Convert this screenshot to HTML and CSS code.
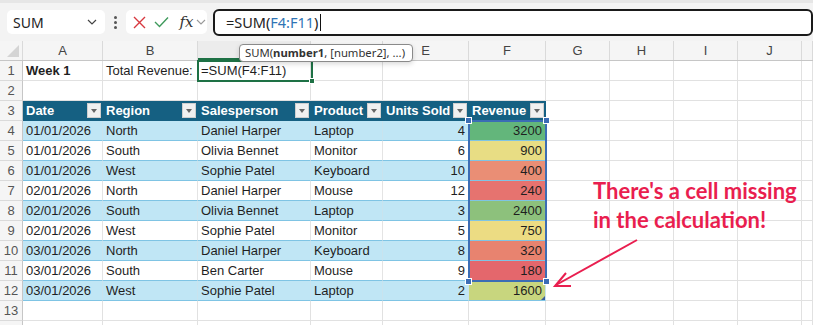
FILE: index.html
```html
<!DOCTYPE html>
<html lang="en">
<head>
  <meta charset="UTF-8">
  <title>Revenue sheet</title>
  <link rel="stylesheet" href="styles.css">
</head>
<body>

<div class="toolbar">
  <div class="name-box">
    <span>SUM</span>
    <svg width="10" height="6" viewBox="0 0 10 6"><path d="M1 1 L5 5 L9 1" fill="none" stroke="#444" stroke-width="1.2"/></svg>
  </div>
  <div class="dots"><i></i><i></i><i></i></div>
  <div class="fx-box">
    <svg width="13" height="13" viewBox="0 0 13 13"><path d="M1 1 L12 12 M12 1 L1 12" stroke="#d7383f" stroke-width="1.4"/></svg>
    <svg width="15" height="12" viewBox="0 0 15 12"><path d="M1 6 L5.5 10.5 L14 1.5" fill="none" stroke="#3f9a5c" stroke-width="1.4"/></svg>
    <span class="fx">fx</span>
    <svg width="10" height="6" viewBox="0 0 10 6"><path d="M1 1 L5 5 L9 1" fill="none" stroke="#999" stroke-width="1.1"/></svg>
  </div>
  <div class="formula-box">
    <span>=SUM(</span><span class="ref">F4:F11</span><span>)</span><span class="caret"></span>
  </div>
</div>

<div class="sheet">
  <div class="colhead">
    <div class="corner"><svg width="12" height="12" viewBox="0 0 12 12"><path d="M12 0 L12 12 L0 12 Z" fill="#d4d4d4"/></svg></div>
    <!-- C and D labels sit under the tooltip -->
    <div>A</div><div>B</div><div class="active"></div><div></div><div>E</div>
    <div>F</div><div>G</div><div>H</div><div>I</div><div>J</div><div></div>
  </div>

  <div class="row">
    <div class="rn">1</div>
    <div class="c bold">Week 1</div><div class="c">Total Revenue:</div><div class="c">=SUM(F4:F11)</div>
    <div class="c"></div><div class="c"></div><div class="c"></div><div class="c"></div><div class="c"></div><div class="c"></div><div class="c"></div><div class="c"></div>
  </div>
  <div class="row">
    <div class="rn">2</div>
    <div class="c"></div><div class="c"></div><div class="c"></div><div class="c"></div><div class="c"></div><div class="c"></div><div class="c"></div><div class="c"></div><div class="c"></div><div class="c"></div><div class="c"></div>
  </div>
  <div class="row">
    <div class="rn">3</div>
    <div class="th">Date<b class="dd"></b></div>
    <div class="th">Region<b class="dd"></b></div>
    <div class="th">Salesperson<b class="dd"></b></div>
    <div class="th">Product<b class="dd"></b></div>
    <div class="th">Units Sold<b class="dd"></b></div>
    <div class="th">Revenue<b class="dd"></b></div>
    <div class="c"></div><div class="c"></div><div class="c"></div><div class="c"></div><div class="c"></div>
  </div>
  <div id="rows"></div>
  <div class="row">
    <div class="rn">13</div>
    <div class="c"></div><div class="c"></div><div class="c"></div><div class="c"></div><div class="c"></div><div class="c"></div><div class="c"></div><div class="c"></div><div class="c"></div><div class="c"></div><div class="c"></div>
  </div>
  <div class="row">
    <div class="rn"></div>
    <div class="c"></div><div class="c"></div><div class="c"></div><div class="c"></div><div class="c"></div><div class="c"></div><div class="c"></div><div class="c"></div><div class="c"></div><div class="c"></div><div class="c"></div>
  </div>

  <div class="active-cell"><i class="handle"></i></div>
  <div class="selection">
    <i class="knob tl"></i><i class="knob tr"></i><i class="knob bl"></i><i class="knob br"></i>
  </div>
  <i class="corner-mark"></i>

  <div class="tooltip">SUM(<b>number1</b>, [number2], ...)</div>

  <div class="note">There's a cell missing<br>in the calculation!</div>
  <svg class="arrow" width="100" height="60" viewBox="0 0 100 60">
    <path d="M90 5 L9 50" stroke="#e91e4f" stroke-width="2" fill="none"/>
    <path d="M19 38 L8 51 L24 51" stroke="#e91e4f" stroke-width="2" fill="none"/>
  </svg>
</div>

<script>
  const data = [
    ["01/01/2026", "North", "Daniel Harper", "Laptop", 4, 3200, "#63b67b"],
    ["01/01/2026", "South", "Olivia Bennet", "Monitor", 6, 900, "#e8dd84"],
    ["01/01/2026", "West", "Sophie Patel", "Keyboard", 10, 400, "#ea8e75"],
    ["02/01/2026", "North", "Daniel Harper", "Mouse", 12, 240, "#e6736f"],
    ["02/01/2026", "South", "Olivia Bennet", "Laptop", 3, 2400, "#8dc17c"],
    ["02/01/2026", "West", "Sophie Patel", "Monitor", 5, 750, "#ecdc83"],
    ["03/01/2026", "North", "Daniel Harper", "Keyboard", 8, 320, "#e8836f"],
    ["03/01/2026", "South", "Ben Carter", "Mouse", 9, 180, "#e4676c"],
    ["03/01/2026", "West", "Sophie Patel", "Laptop", 2, 1600, "#c8d67e"]
  ];

  const rows = document.getElementById("rows");

  data.forEach((r, i) => {
    const row = document.createElement("div");
    row.className = "row " + (i % 2 === 0 ? "band" : "plain");
    let html = '<div class="rn">' + (i + 4) + '</div>';
    html += '<div class="c t">' + r[0] + '</div>';
    html += '<div class="c t">' + r[1] + '</div>';
    html += '<div class="c t">' + r[2] + '</div>';
    html += '<div class="c t">' + r[3] + '</div>';
    html += '<div class="c t num">' + r[4] + '</div>';
    html += '<div class="c t num rev" style="background:' + r[6] + '">' + r[5] + '</div>';
    for (let k = 0; k < 5; k++) html += '<div class="c"></div>';
    row.innerHTML = html;
    rows.appendChild(row);
  });
</script>

</body>
</html>
```

FILE: styles.css
```css
* { box-sizing: border-box; }
body {
  margin: 0;
  width: 813px;
  height: 325px;
  overflow: hidden;
  background: #fff;
  font-family: "Liberation Sans", Arial, sans-serif;
  color: #1f1f1f;
}

/* formula bar */
.toolbar {
  height: 41px;
  display: flex;
  align-items: center;
  padding-left: 7px;
  background: #f3f3f3;
  border-top: 3px solid #e6e6e6;
}
.name-box {
  width: 101px;
  height: 24px;
  background: #fff;
  border-radius: 5px;
  display: flex;
  align-items: center;
  justify-content: space-between;
  padding: 0 8px 0 6px;
  font-family: "Noto Sans", sans-serif;
  font-size: 14px;
  color: #222;
}
.dots {
  width: 22px;
  display: flex;
  flex-direction: column;
  align-items: center;
  gap: 2px;
}
.dots i {
  width: 3px;
  height: 3px;
  border-radius: 50%;
  background: #555;
}
.fx-box {
  width: 83px;
  height: 24px;
  background: #fff;
  border-radius: 5px;
  display: flex;
  align-items: center;
  gap: 8px;
  padding-left: 7px;
}
.fx {
  font-family: "DejaVu Serif", serif;
  font-style: italic;
  font-size: 15px;
  color: #333;
  margin-left: 2px;
  margin-right: -5px;
}
.formula-box {
  margin-left: 6px;
  width: 620px;
  height: 27px;
  background: #fff;
  border: 2px solid #1a1a1a;
  border-radius: 6px;
  display: flex;
  align-items: center;
  padding-left: 11px;
  font-family: "Noto Sans", sans-serif;
  font-size: 14.5px;
  color: #222;
}
.formula-box .ref { color: #2f74b5; }
.caret {
  width: 1px;
  height: 17px;
  background: #111;
  margin-left: 2px;
}

/* grid */
.sheet { position: relative; }
.colhead, .row {
  display: grid;
  grid-template-columns: 23px 80px 95px 113px 72px 86px 77px 64px 64px 64px 64px 1fr;
  height: 20px;
}
.colhead {
  background: #f5f5f5;
  border-bottom: 1px solid #c6c6c6;
  font-size: 13px;
  color: #444;
}
.colhead div {
  display: flex;
  align-items: center;
  justify-content: center;
  border-right: 1px solid #dadada;
}
.colhead .corner {
  justify-content: flex-end;
  align-items: flex-end;
  padding: 0 3px 3px 0;
}
.colhead .active {
  border-bottom: 2px solid #1e7145;
  background: #ececec;
}
.rn {
  background: #f5f5f5;
  border-right: 1px solid #c6c6c6;
  border-bottom: 1px solid #dadada;
  font-size: 13px;
  color: #555;
  display: flex;
  align-items: center;
  justify-content: center;
}
.c {
  border-right: 1px solid #e1e1e1;
  border-bottom: 1px solid #e1e1e1;
  font-size: 13px;
  line-height: 19px;
  padding: 0 3px;
  white-space: nowrap;
  overflow: visible;
}
.bold { font-weight: bold; }
.th {
  background: #156082;
  color: #fff;
  font-weight: bold;
  font-size: 13px;
  line-height: 20px;
  padding: 0 3px;
  position: relative;
  white-space: nowrap;
}
.dd {
  position: absolute;
  right: 2px;
  top: 2px;
  width: 14px;
  height: 15px;
  background: #f0f0f0;
  border: 1px solid #cfcfcf;
}
.dd::after {
  content: "";
  position: absolute;
  left: 3px;
  top: 5px;
  border-left: 3.5px solid transparent;
  border-right: 3.5px solid transparent;
  border-top: 4px solid #666;
}
.band .t { background: #c0e6f5; }
.plain .t { background: #fff; }
.row .t {
  border-bottom: 1px solid #7fc4e4;
  border-right-color: #c9e3ee;
}
.plain .t { border-right-color: #e4e4e4; }
.num { text-align: right; }
.rev { border-right-color: transparent; }

/* overlays */
.active-cell {
  position: absolute;
  left: 197px;
  top: 19px;
  width: 116px;
  height: 22px;
  border: 2px solid #1e7145;
}
.handle {
  position: absolute;
  right: -4px;
  bottom: -4px;
  width: 6px;
  height: 6px;
  background: #1e7145;
  border: 1px solid #fff;
}
.selection {
  position: absolute;
  left: 468px;
  top: 79px;
  width: 79px;
  height: 162px;
  border: 2px solid #3b6db5;
}
.knob {
  position: absolute;
  width: 7px;
  height: 7px;
  background: #3b6db5;
  border: 1px solid #fff;
}
.tl { left: -5px; top: -5px; }
.tr { right: -5px; top: -5px; }
.bl { left: -5px; bottom: -5px; }
.br { right: -5px; bottom: -5px; }
.corner-mark {
  position: absolute;
  left: 541px;
  top: 255px;
  border-left: 4px solid transparent;
  border-bottom: 4px solid #3b5f9a;
}
.tooltip {
  position: absolute;
  left: 239px;
  top: 3px;
  width: 174px;
  height: 18px;
  background: #fff;
  border: 1px solid #8a8a8a;
  border-radius: 4px;
  box-shadow: 0 2px 5px rgba(0,0,0,0.15);
  font-family: "Noto Sans", sans-serif;
  font-size: 11.3px;
  line-height: 16px;
  padding-left: 5px;
  color: #333;
  white-space: nowrap;
}
.note {
  position: absolute;
  left: 593px;
  top: 135px;
  font-family: Lato, sans-serif;
  font-weight: bold;
  font-size: 22px;
  line-height: 29px;
  color: #e91e4f;
  white-space: nowrap;
}
.arrow {
  position: absolute;
  left: 547px;
  top: 194px;
}
```
